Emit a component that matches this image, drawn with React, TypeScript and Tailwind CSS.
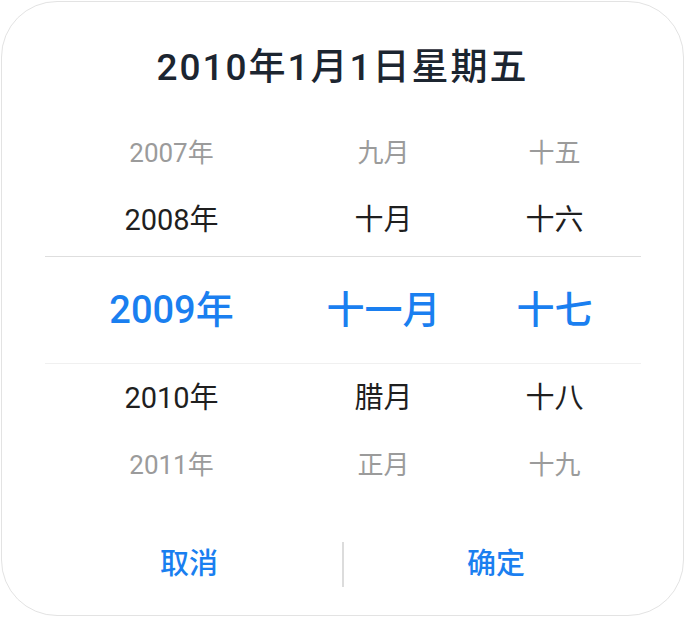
import React from 'react'

type Cell = { year: string; month: string; day: string }

const ROWS: { cells: Cell; kind: 'far' | 'near' | 'active' }[] = [
  { cells: { year: '2007年', month: '九月', day: '十五' }, kind: 'far' },
  { cells: { year: '2008年', month: '十月', day: '十六' }, kind: 'near' },
  { cells: { year: '2009年', month: '十一月', day: '十七' }, kind: 'active' },
  { cells: { year: '2010年', month: '腊月', day: '十八' }, kind: 'near' },
  { cells: { year: '2011年', month: '正月', day: '十九' }, kind: 'far' },
]

const ROW_STYLE = {
  far: 'h-[66px] text-[26px] text-[#9b9b9b]',
  near: 'h-[70px] text-[29px] text-[#1f1f1f]',
  active: 'h-[108px] text-[38px] font-medium text-[#1a7ff0] border-t border-b border-t-[#dedede] border-b-[#f0f0f0]',
}

export default function App() {
  return (
    <div className="w-[685px] h-[617px] bg-white pl-px pt-px" style={{ fontFamily: "Roboto, 'Noto Sans CJK SC', sans-serif" }}>
      <div className="w-[683px] h-[615px] bg-white border border-[#e3e3e3] rounded-[56px] flex flex-col">

        {/* Titre */}
        <h1 className="pt-[44px] text-center text-[37px] leading-[44px] tracking-[2px] font-medium text-[#1c2530]">
          2010年1月1日星期五
        </h1>

        {/* Roues */}
        <div className="w-[596px] mx-auto mt-[30px]">
          {ROWS.map((row, i) => (
            <div key={i} className={`grid grid-cols-[254px_170px_172px] items-center ${ROW_STYLE[row.kind]} ${i === 4 ? 'pb-[3px]' : ''}`}>
              <span className="text-center">{row.cells.year}</span>
              <span className="text-center">{row.cells.month}</span>
              <span className="text-center">{row.cells.day}</span>
            </div>
          ))}
        </div>

        {/* Boutons */}
        <div className="w-[612px] mx-auto mt-[42px] h-[45px] flex items-center">
          <button className="flex-1 text-center text-[29px] font-medium text-[#1a7ff0]">取消</button>
          <div className="w-[2px] h-[45px] bg-[#dcdcdc]" />
          <button className="flex-1 text-center text-[29px] font-medium text-[#1a7ff0]">确定</button>
        </div>
      </div>
    </div>
  )
}
